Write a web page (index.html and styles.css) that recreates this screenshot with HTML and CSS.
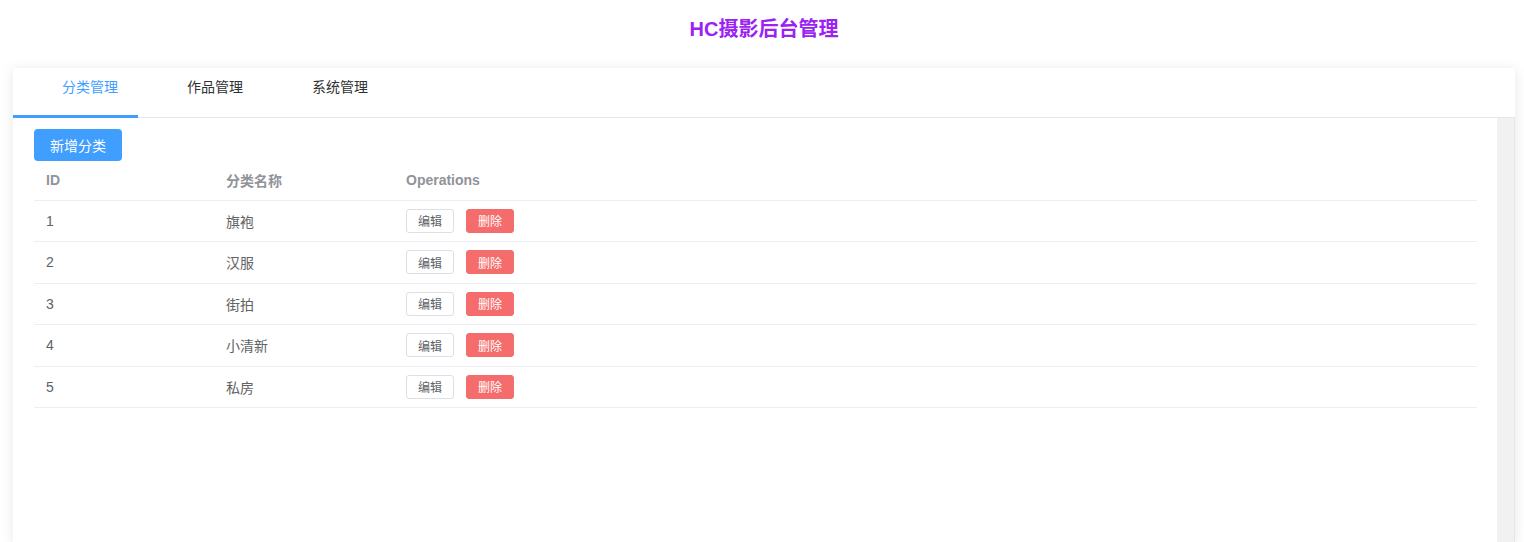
FILE: index.html
```html
<!DOCTYPE html>
<html lang="zh">
<head>
<meta charset="utf-8">
<title>HC摄影后台管理</title>
<link rel="stylesheet" href="styles.css">
</head>
<body>
<h1 class="title">HC摄影后台管理</h1>
<div class="card">
  <div class="tabs">
    <div class="tab active">分类管理</div>
    <div class="tab">作品管理</div>
    <div class="tab">系统管理</div>
  </div>
  <div class="body">
    <div class="content">
      <button class="btn-primary">新增分类</button>
      <div class="table">
        <div class="row head">
          <div class="cell">ID</div>
          <div class="cell">分类名称</div>
          <div class="cell">Operations</div>
        </div>
        <div class="row">
          <div class="cell">1</div>
          <div class="cell">旗袍</div>
          <div class="cell ops"><button class="btn-mini">编辑</button><button class="btn-mini danger">删除</button></div>
        </div>
        <div class="row">
          <div class="cell">2</div>
          <div class="cell">汉服</div>
          <div class="cell ops"><button class="btn-mini">编辑</button><button class="btn-mini danger">删除</button></div>
        </div>
        <div class="row">
          <div class="cell">3</div>
          <div class="cell">街拍</div>
          <div class="cell ops"><button class="btn-mini">编辑</button><button class="btn-mini danger">删除</button></div>
        </div>
        <div class="row">
          <div class="cell">4</div>
          <div class="cell">小清新</div>
          <div class="cell ops"><button class="btn-mini">编辑</button><button class="btn-mini danger">删除</button></div>
        </div>
        <div class="row">
          <div class="cell">5</div>
          <div class="cell">私房</div>
          <div class="cell ops"><button class="btn-mini">编辑</button><button class="btn-mini danger">删除</button></div>
        </div>
      </div>
    </div>
    <div class="scrollbar"></div>
  </div>
</div>
</body>
</html>
```

FILE: styles.css
```css
* { box-sizing: border-box; }
html, body { margin: 0; padding: 0; background: #fff; overflow: hidden; }
body {
  font-family: "Helvetica Neue", "Liberation Sans", "Noto Sans CJK SC", sans-serif;
  color: #303133;
  height: 542px;
}
.title {
  margin: 0;
  padding-top: 15px;
  height: 68px;
  font-size: 20px;
  line-height: 28px;
  font-weight: bold;
  text-align: center;
  color: #9b22f3;
  padding-left: 4px;
}
.card {
  margin-left: 13px;
  width: 1502px;
  height: 474px;
  background: #fff;
  box-shadow: 0 2px 12px rgba(0, 0, 0, 0.1);
  display: flex;
  flex-direction: column;
}
.tabs {
  display: flex;
  height: 50px;
  padding-top: 2px;
  border-bottom: 1px solid #e4e7ed;
}
.tab {
  width: 125px;
  padding-left: 49px;
  font-size: 14px;
  line-height: 34px;
  color: #303133;
  position: relative;
}
.tab.active { color: #409eff; }
.tab.active::after {
  content: "";
  position: absolute;
  left: 0; right: 0; bottom: -1px;
  height: 3px;
  background: #409eff;
}
.body {
  flex: 1;
  display: flex;
  min-height: 0;
}
.content {
  flex: 1;
  padding: 11px 20px 0 21px;
}
.scrollbar {
  width: 18px;
  background: #f1f1f1;
  border-right: 1px solid #e6e6ec;
}
.btn-primary {
  display: block;
  height: 32px;
  width: 88px;
  padding: 0;
  border: none;
  border-radius: 4px;
  background: #409eff;
  color: #fff;
  font-family: inherit;
  font-size: 14px;
  cursor: pointer;
}
.table { width: 100%; }
.row {
  display: flex;
  height: 41.5px;
  align-items: center;
  border-bottom: 1px solid #ebeef5;
  font-size: 14px;
  color: #606266;
}
.row.head {
  height: 39.5px;
  font-weight: bold;
  color: #909399;
}
.cell {
  width: 180px;
  padding-left: 12px;
}
.cell.ops {
  display: flex;
  gap: 12px;
}
.btn-mini {
  width: 48px;
  height: 24px;
  padding: 0;
  border: 1px solid #dcdfe6;
  border-radius: 3px;
  background: #fff;
  color: #606266;
  font-family: inherit;
  font-size: 12px;
}
.btn-mini.danger {
  background: #f56c6c;
  border-color: #f56c6c;
  color: #fff;
}
```
